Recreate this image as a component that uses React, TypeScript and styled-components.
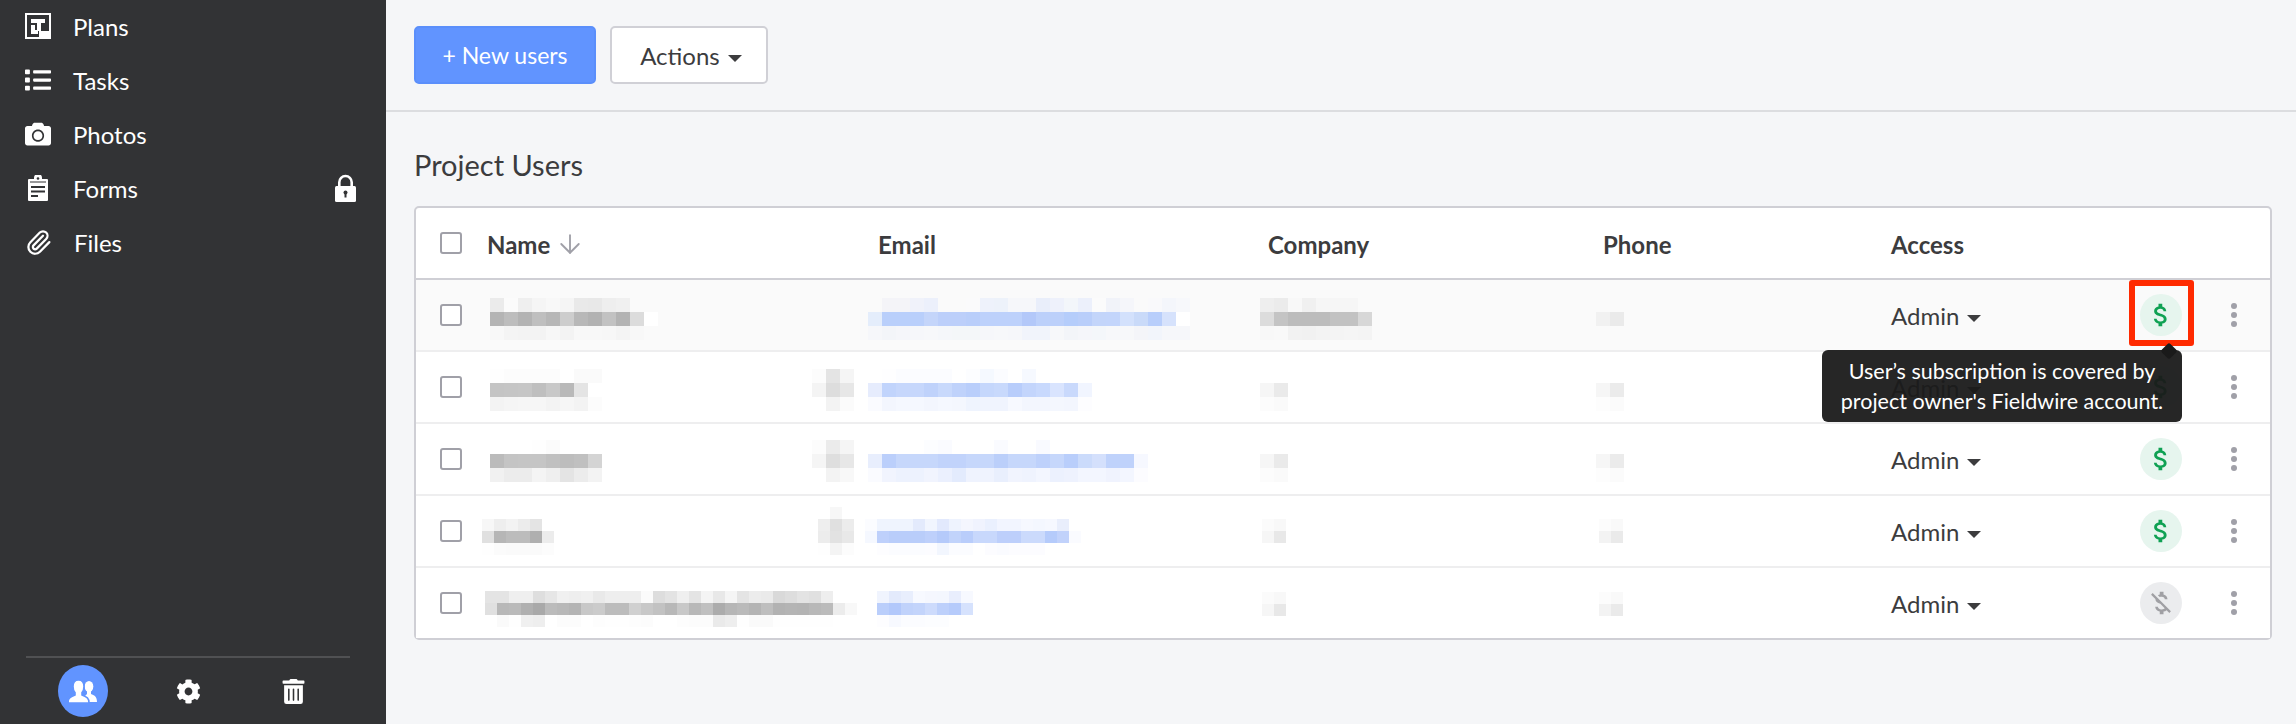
import styled, { createGlobalStyle } from 'styled-components';
import { ArrowDown, Paperclip } from 'lucide-react';
import { FaCamera, FaCog, FaList, FaTrashAlt } from 'react-icons/fa';
import { MdAttachMoney, MdMoneyOff } from 'react-icons/md';

type PatchData = { x: number; y: number; size: number; rows: string[] };
type UserRow = {
	name: PatchData[];
	email: PatchData;
	company: PatchData;
	phone: PatchData;
	covered: boolean;
	hovered?: boolean;
};

// the blurred names and addresses: one token per mosaic square, "-" is empty
const users: UserRow[] = [
	{
		hovered: true,
		name: [
			{
				x: 3,
				y: 18,
				size: 14,
				rows: [
					'eb fb ef f5 f8 f5 e9 e8 ee f0',
					'b4 bd b3 bf b7 cd b8 b2 c2 b3 dc ff',
					'f8 f4 f3 f3 f7 f3 f8 f8 f7 f4 f8',
				],
			},
		],
		email: {
			x: -10,
			y: 18,
			size: 14,
			rows: [
				'- f4f4f8 f4f4f8 f0f2fa ecf0fb fafafa fafafa fafafb eef2fb edf2fa f6f7fa f6f7fa e9eefa eef1fb f3f6fa ecf0fb fbfbfb f1f3f9 f5f6fa fafafa f9f9fb f4f6fb f7f8fb',
				'e4edfb b9cffb b9cffb b9cffb c4d5fa bccffa bccffa b9cefa bdd1fb bdd1fb bdd1fb b3c8f9 bcd0fa bcd0fa b5cdfb b9cefa c3d5fa c3d5fb d3e1fc c9daf9 b8cefb d6e2fc ffffff',
				'f6f7fa f3f5f9 f5f6fa f6f7fa f7f8fa f5f7fa f4f7f9 f4f7f9 f6f7fa f7f8fa f6f7fa f1f4fb f1f4fb f7f8fa f3f5f9 f5f6fa f4f7fa f7f8fa f7f8fa f4f5f9 f2f5fb f6f7fa f6f7fa',
			],
		},
		company: {
			x: -8,
			y: 18,
			size: 14,
			rows: ['ee eb f8 f0 f6 f6 f6', 'dc c4 bc bc bc c2 c2 d7', 'f8 f9 f2 f1 f3 f4 f5 f4'],
		},
		phone: { x: -7, y: 32, size: 14, rows: ['f1 ea'] },
		covered: true,
	},
	{
		name: [
			{
				x: 3,
				y: 17,
				size: 14,
				rows: ['fe fc fc fc fc ff fa fa', 'c4 c5 c6 bf c8 b9 e4', 'f3 f5 f6 f6 f3 f6 f3 fc'],
			},
			{ x: 210, y: 17, size: 14, rows: ['fc e4 f5', 'f4 dd e7', 'ff f3 fb'] },
		],
		email: {
			x: -10,
			y: 17,
			size: 14,
			rows: [
				'- fefeff fbfcff fbfcff fbfcff fbfcff - fcfdff f5f9ff fbfcff - f6f9ff',
				'e6ecfd c1d4fc c6d7fc c6d7fc bfd2fb c8d9fc bfd2fb b9cefb c5d7fc c8d9fc b8cdfb c3d5fc c8d9fd d9e4fe c9d9fc f1f5ff',
				'fafbff f3f6fe f5f8ff f5f8ff f3f6fe f5f8ff f4f7fe eff4fe f0f4fe f0f4fe f7f9ff f3f6fe f3f6fe f4f7fe f3f6fe fdfdff',
			],
		},
		company: { x: -8, y: 31, size: 14, rows: ['f6 ea', 'fc fa'] },
		phone: { x: -7, y: 31, size: 14, rows: ['f6 eb', 'fd fb'] },
		covered: true,
	},
	{
		name: [
			{
				x: 3,
				y: 16,
				size: 14,
				rows: ['- - - fe fb', 'bb c4 c5 c5 c0 bd c0 d4', 'f1 ec ec f4 ef e4 ec f3'],
			},
			{ x: 210, y: 16, size: 14, rows: ['fc eb f5', 'f5 de e7', 'ff f3 f8'] },
		],
		email: {
			x: -10,
			y: 16,
			size: 14,
			rows: [
				'- - - - fcfdff fafbff - - - fafbff - - f9faff',
				'e8eefd bbcffb c6d7fb c6d7fb c6d7fb c1d3fb c1d3fb c6d7fb c6d7fb bbcffa c6d7fb c6d7fb bed1fb c6d7fb b9cefb cbdbfb d4e0fc bfd2fb bfd2fb f6f8ff',
				'fafbff f1f4fe edf2fe edf2fe f1f4fe ebf0fe e3ebfd eff3fe eff3fe e9effd f1f4fe eff3fe f3f6ff ecf1fe eef2fe f3f6ff f3f6ff f0f3fe f3f6ff fcfcff',
			],
		},
		company: { x: -8, y: 30, size: 14, rows: ['f6 ea', 'fc fa'] },
		phone: { x: -7, y: 30, size: 14, rows: ['f6 eb', 'fd fb'] },
		covered: true,
	},
	{
		name: [
			{
				x: -5,
				y: 23,
				size: 12,
				rows: ['f7 ee f3 ec e4', 'e0 b6 bc bc af ec', 'fe fb fa fa fa fc'],
			},
			{ x: 264, y: 11, size: 12, rows: ['- f7', 'ee e0 ec', 'ec e2 e8', 'fe f4 fc'] },
		],
		email: {
			x: -13,
			y: 23,
			size: 12,
			rows: [
				'fbfcff eff4fe eff4fe eff4fe e3eafc f1f5fe e2e9fd eef3fe f4f6fe f0f3fe eaf0fe f2f5ff f2f5ff f6f8ff f4f7ff f6f8ff e9eefc',
				'f5f8ff bed0fb b9cdfa b9cdfa b9cdfa bed0fb b5cafa c1d3fb b9cdfb c8d8fc c8d8fc bdcffb bdcffb cbdafc cbdafc b5cbfb c1d2fb fafbff',
				'- fdfdff fbfcff fbfcff fbfcff fcfcff f2f6fe fbfcff fbfcff - fcfcff fafbff fcfcff fcfcff fcfcff',
			],
		},
		company: { x: -6, y: 23, size: 12, rows: ['fb f8', 'f6 e8'] },
		phone: { x: -4, y: 23, size: 12, rows: ['fc f9', 'f3 ea'] },
		covered: true,
	},
	{
		name: [
			{
				x: -2,
				y: 23,
				size: 12,
				rows: [
					'e4 e4 ef ef de e6 f0 ee f0 e9 ee ee ee fb dd e3 ef e4 f4 e8 f5 e4 ec ea d9 dd e3 e0 ee',
					'e0 b8 ba b0 a9 bb b8 b4 c8 cb bc bc d0 c8 c2 b8 c8 b8 c0 ac b6 ba b4 be b2 b4 b3 b8 bb ec f8',
					'- fa fe f0 ee ff fc fc ff fd fe fe fd fc ff ff fd fc fc ea ee fe fa fa fe fe fe fe fe',
				],
			},
		],
		email: {
			x: -1,
			y: 23,
			size: 12,
			rows: [
				'f0f4fe e3eafc e8eefd f7f9ff f5f7fe f4f7fe e9eefd f7f9ff',
				'bacefb b2c8fb c0d2fb c3d4fb cddbfc bdd0fb b6cbfb d6e2fd',
				'fdfdff f7f9ff fbfcff fbfcff fcfdff fcfdff',
			],
		},
		company: { x: -6, y: 24, size: 12, rows: ['fb f8', 'f6 e8'] },
		phone: { x: -4, y: 24, size: 12, rows: ['fc f9', 'f3 ea'] },
		covered: false,
	},
];

function Patch({ x, y, size, rows }: PatchData) {
	const cells = rows.map((row) => row.split(' '));
	const columns = Math.max(...cells.map((row) => row.length));
	return (
		<PatchSvg
			$x={x}
			$y={y}
			width={columns * size}
			height={rows.length * size}
			shapeRendering='crispEdges'
		>
			{cells.map((row, r) =>
				row.map((tone, c) =>
					tone === '-' ? null : (
						<rect
							key={`${r}-${c}`}
							x={c * size}
							y={r * size}
							width={size}
							height={size}
							fill={tone.length === 2 ? `#${tone}${tone}${tone}` : `#${tone}`}
						/>
					),
				),
			)}
		</PatchSvg>
	);
}

function PlansIcon() {
	return (
		<svg width='26' height='26' viewBox='0 0 26 26'>
			<rect width='26' height='26' fill='#fff' />
			<rect x='2' y='2' width='22' height='22' fill='#323335' />
			<path fill='#fff' d='M14 18H24V24H14zM6 6H20V10H16V18H12V10H6zM6 12H10V17H13V21H6z' />
		</svg>
	);
}

function ClipboardIcon() {
	return (
		<svg width='20' height='26' viewBox='0 0 20 26'>
			<path
				fill='#fff'
				d='M1 4h5V3a4 4 0 0 1 8 0v1h5a1 1 0 0 1 1 1v20a1 1 0 0 1-1 1H1a1 1 0 0 1-1-1V5a1 1 0 0 1 1-1z'
			/>
			<circle cx='10' cy='3.500' r='1.300' fill='#323335' />
			<path fill='#323335' d='M2 6.500h16v1H2zM3 11h14v2H3zM3 15.500h14v2H3zM3 20h7v2H3z' />
		</svg>
	);
}

function LockIcon() {
	return (
		<svg width='21' height='28' viewBox='0 0 21 28'>
			<path
				fill='none'
				stroke='#fff'
				strokeWidth='2.600'
				d='M4.300 13V8.200a6.200 6.200 0 0 1 12.400 0V13'
			/>
			<rect y='12' width='21' height='16' rx='1.500' fill='#fff' />
			<circle cx='10.500' cy='18.500' r='2' fill='#323335' />
			<rect x='9.500' y='19' width='2' height='4.500' fill='#323335' />
		</svg>
	);
}

function TeamIcon() {
	return (
		<svg width='28' height='24' viewBox='0 0 28 24'>
			<ellipse cx='20' cy='7.500' rx='4.300' ry='5.500' fill='#fff' />
			<path fill='#fff' d='M15 23v-5l3-3v-3h4v3c3 1.500 6 2 6 8z' />
			<path
				fill='#fff'
				stroke='#6194ff'
				strokeWidth='1.600'
				d='M-1 24c0-5 2-6 7-8v-2.500c-1.500-1.500-2-3.500-2-6C4 3 6.500 1 9.500 1S15 3 15 7.500c0 2.500-.5 4.500-2 6V16c5 2 7 3 7 8z'
			/>
		</svg>
	);
}

const navItems = [
	{ label: 'Plans', icon: <PlansIcon /> },
	{ label: 'Tasks', icon: <FaList size={26} color='#fff' /> },
	{ label: 'Photos', icon: <FaCamera size={26} color='#fff' /> },
	{ label: 'Forms', icon: <ClipboardIcon />, locked: true },
	{ label: 'Files', icon: <Paperclip size={27} color='#fff' strokeWidth={2} /> },
];

function App() {
	return (
		<Page>
			<GlobalStyle />
			<Sidebar>
				<Nav>
					{navItems.map((item) => (
						<NavItem key={item.label}>
							<NavIcon>{item.icon}</NavIcon>
							<NavLabel>{item.label}</NavLabel>
							{item.locked && (
								<NavLock>
									<LockIcon />
								</NavLock>
							)}
						</NavItem>
					))}
				</Nav>
				<SidebarFooter>
					<FooterButton $active>
						<TeamIcon />
					</FooterButton>
					<FooterButton>
						<FaCog size={25} color='#fff' />
					</FooterButton>
					<FooterButton>
						<FaTrashAlt size={25} color='#fff' />
					</FooterButton>
				</SidebarFooter>
			</Sidebar>
			<Main>
				<Toolbar>
					<NewButton>+ New users</NewButton>
					<ActionsButton>
						Actions <Caret />
					</ActionsButton>
				</Toolbar>
				<Content>
					<Title>Project Users</Title>
					<Table>
						<HeaderRow>
							<Checkbox />
							<HeaderCell>
								Name
								<ArrowDown size={30} color='#a0a0a8' strokeWidth={1.5} />
							</HeaderCell>
							<HeaderCell>Email</HeaderCell>
							<HeaderCell>Company</HeaderCell>
							<HeaderCell>Phone</HeaderCell>
							<HeaderCell>Access</HeaderCell>
						</HeaderRow>
						{users.map((user, index) => (
							<Row key={index} $hovered={user.hovered}>
								<Checkbox />
								<BlurCell>
									{user.name.map((patch, i) => (
										<Patch key={i} {...patch} />
									))}
								</BlurCell>
								<BlurCell>
									<Patch {...user.email} />
								</BlurCell>
								<BlurCell>
									<Patch {...user.company} />
								</BlurCell>
								<BlurCell>
									<Patch {...user.phone} />
								</BlurCell>
								<AccessCell>
									Admin <Caret />
								</AccessCell>
								<SubscriptionCell>
									<Badge $covered={user.covered}>
										{user.covered ? <MdAttachMoney size={30} /> : <MdMoneyOff size={30} />}
									</Badge>
									{user.hovered && (
										<>
											<Highlight />
											<Tooltip>
												User’s subscription is covered by
												<br />
												project owner's Fieldwire account.
											</Tooltip>
										</>
									)}
								</SubscriptionCell>
								<Kebab>
									<Dot />
									<Dot />
									<Dot />
								</Kebab>
							</Row>
						))}
					</Table>
				</Content>
			</Main>
		</Page>
	);
}

const GlobalStyle = createGlobalStyle`
	html, body {
		margin: 0;
		padding: 0;
	}

	body {
		font-family: Lato, 'Open Sans', sans-serif;
		font-size: 24px;
		color: #3c3c3e;
	}
`;

const Page = styled.div`
	display: flex;
	width: 2296px;
	height: 724px;
	overflow: hidden;
	background: #f5f6f8;
`;

const Sidebar = styled.aside`
	display: flex;
	flex-direction: column;
	justify-content: space-between;
	flex: 0 0 386px;
	background: #323335;
`;

const Nav = styled.nav`
	display: flex;
	flex-direction: column;
	margin-top: -1px;
	padding: 0 30px 0 25px;
`;

const NavItem = styled.div`
	display: flex;
	align-items: center;
	height: 54px;
	color: #fff;
`;

const NavIcon = styled.div`
	display: flex;
	justify-content: center;
	flex: 0 0 26px;
`;

const NavLabel = styled.span`
	margin-left: 22px;
	font-size: 24px;
`;

const NavLock = styled.div`
	display: flex;
	margin-left: auto;
`;

const SidebarFooter = styled.div`
	display: grid;
	grid-template-columns: repeat(3, 105px);
	justify-content: center;
	align-items: center;
	justify-items: center;
	height: 66px;
	margin: 0 36px 0 26px;
	border-top: 2px solid #505153;
`;

const FooterButton = styled.div<{ $active?: boolean }>`
	display: flex;
	align-items: center;
	justify-content: center;
	width: 50px;
	height: 52px;
	border-radius: 50%;
	background: ${(p) => (p.$active ? '#6194ff' : 'transparent')};
`;

const Main = styled.main`
	flex: 1;
	display: flex;
	flex-direction: column;
`;

const Toolbar = styled.div`
	display: flex;
	gap: 14px;
	height: 84px;
	padding: 26px 28px 0;
	border-bottom: 2px solid #dcdde0;
`;

const NewButton = styled.button`
	width: 182px;
	height: 58px;
	border: 2px solid #5b8ffb;
	border-radius: 5px;
	background: #6194ff;
	color: #fff;
	font: 400 23px Lato, sans-serif;
`;

const ActionsButton = styled.button`
	width: 158px;
	height: 58px;
	padding: 0 0 0 4px;
	border: 2px solid #d0d0d6;
	border-radius: 5px;
	background: #fff;
	color: #3c3c3e;
	font: 400 24px Lato, sans-serif;
`;

const Caret = styled.span`
	display: inline-block;
	margin-left: 2px;
	vertical-align: 3px;
	border-left: 7px solid transparent;
	border-right: 7px solid transparent;
	border-top: 7px solid #3c3c3e;
`;

const Content = styled.div`
	padding: 35px 24px 0 28px;
`;

const Title = styled.h2`
	margin: 0 0 23px;
	font-size: 29px;
	font-weight: 400;
	line-height: 36px;
	color: #3c3c3e;
`;

const Table = styled.div`
	background: #fff;
	border: 2px solid #cfcfd5;
	border-radius: 5px;
	box-sizing: border-box;
	width: 1858px;
`;

const columns = '47px 391px 390px 335px 288px 249px 42px 1fr';

const HeaderRow = styled.div`
	display: grid;
	grid-template-columns: ${columns};
	align-items: center;
	height: 70px;
	padding-left: 24px;
	border-bottom: 2px solid #cfcfd5;
`;

const HeaderCell = styled.div`
	display: flex;
	align-items: center;
	gap: 5px;
	padding-top: 2px;
	font-size: 24px;
	font-weight: 700;
	color: #3c3c3e;
`;

const Row = styled.div<{ $hovered?: boolean }>`
	display: grid;
	grid-template-columns: ${columns};
	align-items: center;
	height: 70px;
	padding-left: 24px;
	background: ${(p) => (p.$hovered ? '#fafafa' : '#fff')};
	border-bottom: 2px solid #eeeeef;

	&:last-child {
		border-bottom: none;
	}
`;

const Checkbox = styled.div`
	width: 22px;
	height: 22px;
	box-sizing: border-box;
	border: 2px solid #a0a0a8;
	border-radius: 3px;
	background: #fff;
`;

const BlurCell = styled.div`
	display: flex;
	align-items: flex-start;
	align-self: start;
	height: 70px;
`;

const PatchSvg = styled.svg<{ $x: number; $y: number }>`
	flex: none;
	display: block;
	margin-left: ${(p) => p.$x}px;
	margin-top: ${(p) => p.$y}px;
`;

const AccessCell = styled.div`
	font-size: 24px;
	color: #3c3c3e;
`;

const SubscriptionCell = styled.div`
	position: relative;
	width: 42px;
	height: 42px;
`;

const Badge = styled.div<{ $covered: boolean }>`
	display: flex;
	align-items: center;
	justify-content: center;
	width: 42px;
	height: 42px;
	border-radius: 50%;
	background: ${(p) => (p.$covered ? '#e6f5ee' : '#ebecee')};
	color: ${(p) => (p.$covered ? '#0fa153' : '#a0a0a4')};
`;

const Highlight = styled.div`
	position: absolute;
	top: -14px;
	left: -11px;
	width: 65px;
	height: 66px;
	box-sizing: border-box;
	border: 6px solid #ff2a00;
	border-radius: 3px;
`;

const Tooltip = styled.div`
	position: absolute;
	z-index: 2;
	top: 56px;
	right: 0;
	width: 360px;
	height: 72px;
	display: flex;
	align-items: center;
	justify-content: center;
	text-align: center;
	font-size: 21.5px;
	line-height: 30px;
	color: #fff;
	white-space: nowrap;
	background: rgba(26, 26, 26, 0.95);
	border-radius: 6px;

	&::before {
		content: '';
		position: absolute;
		top: -5px;
		right: 7px;
		width: 12px;
		height: 12px;
		background: #1a1a1a;
		border-radius: 2px;
		transform: rotate(45deg);
	}
`;

const Kebab = styled.div`
	display: flex;
	flex-direction: column;
	gap: 3px;
	padding-left: 49px;
`;

const Dot = styled.span`
	width: 6px;
	height: 6px;
	border-radius: 50%;
	background: #a0a0a8;
`;

export default App;
